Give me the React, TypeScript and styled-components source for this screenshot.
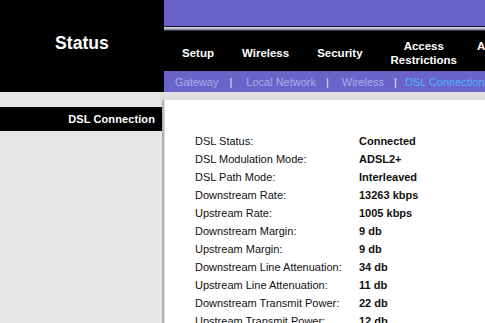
import React from "react";
import styled, { createGlobalStyle } from "styled-components";

const Global = createGlobalStyle`
  html, body { margin: 0; padding: 0; background: #e6e6e6; }
  body { width: 485px; height: 323px; overflow: hidden; font-family: "Liberation Sans", Arial, sans-serif; }
`;

const Page = styled.div`
  width: 485px;
  height: 323px;
  overflow: hidden;
  display: flex;
  flex-direction: column;
`;

const Header = styled.div`
  display: grid;
  grid-template-columns: 164px 1fr;
  height: 92px;
  background: #000;
`;

const TitleCell = styled.div`
  display: flex;
  align-items: flex-start;
  justify-content: center;
  padding-top: 32px;
  color: #fff;
  font-weight: bold;
  font-size: 17.6px;
  line-height: 22px;
`;

const HeaderRight = styled.div`
  display: flex;
  flex-direction: column;
  min-width: 0;
`;

const TopBar = styled.div`
  height: 26px;
  background: #6a64c9;
`;

const Divider = styled.div`
  height: 5px;
  background: linear-gradient(
    to bottom,
    #14142a 0px,
    #14142a 1px,
    #d8d8e4 1px,
    #b8b8c8 3px,
    #55556a 4px,
    #1a1a22 5px
  );
`;

const Nav = styled.div`
  height: 40px;
  box-sizing: border-box;
  padding: 4px 0 0 18px;
  display: flex;
  align-items: center;
  gap: 28px;
  white-space: nowrap;
`;

const NavItem = styled.div<{ $shift?: number }>`
  color: #fff;
  font-weight: bold;
  font-size: 11.5px;
  line-height: 14px;
  text-align: center;
  margin-left: ${(p) => (p.$shift ? `${p.$shift}px` : "0")};
`;

const SubNav = styled.div`
  height: 21px;
  background: #6a64c9;
  display: flex;
  align-items: center;
  padding-left: 11px;
  font-size: 11px;
  white-space: nowrap;
`;

const SubLink = styled.span<{ $active?: boolean }>`
  color: ${(p) => (p.$active ? "#4ab4ff" : "#aeaaea")};
`;

const Sep = styled.span<{ $left: number; $right: number }>`
  color: #e8e8ff;
  margin: 0 ${(p) => p.$right}px 0 ${(p) => p.$left}px;
`;

const Body = styled.div`
  flex: 1;
  display: grid;
  grid-template-columns: 162px 1fr;
  min-height: 0;
`;

const Side = styled.div`
  background: #e6e6e6;
  padding-top: 15px;
`;

const SideBar = styled.div`
  height: 24px;
  background: #000;
  color: #fff;
  font-weight: bold;
  font-size: 11px;
  letter-spacing: 0.1px;
  display: flex;
  align-items: center;
  justify-content: flex-end;
  padding-right: 7px;
`;

const Main = styled.div`
  display: flex;
  flex-direction: column;
  min-width: 0;
`;

const Band = styled.div`
  height: 8px;
  margin-left: -2px;
  background: linear-gradient(to bottom, #e4e4e4, #dadada);
`;

const Content = styled.div`
  flex: 1;
  background: #fff;
  border-left: 2px solid #b4b4b4;
  box-shadow: inset 1px 0 0 #dcdcdc;
  padding: 32px 0 0 31px;
`;

const Row = styled.div`
  display: grid;
  grid-template-columns: 164px 1fr;
  height: 18px;
  align-items: center;
  font-size: 11px;
  color: #111;
  white-space: nowrap;
`;

const Label = styled.span``;

const Value = styled.span`
  font-weight: bold;
`;

const rows: [string, string][] = [
  ["DSL Status:", "Connected"],
  ["DSL Modulation Mode:", "ADSL2+"],
  ["DSL Path Mode:", "Interleaved"],
  ["Downstream Rate:", "13263 kbps"],
  ["Upstream Rate:", "1005 kbps"],
  ["Downstream Margin:", "9 db"],
  ["Upstream Margin:", "9 db"],
  ["Downstream Line Attenuation:", "34 db"],
  ["Upstream Line Attenuation:", "11 db"],
  ["Downstream Transmit Power:", "22 db"],
  ["Upstream Transmit Power:", "12 db"],
];

export default function App() {
  return (
    <>
      <Global />
      <Page>
        <Header>
          <TitleCell>Status</TitleCell>
          <HeaderRight>
            <TopBar />
            <Divider />
            <Nav>
              <NavItem>Setup</NavItem>
              <NavItem>Wireless</NavItem>
              <NavItem>Security</NavItem>
              <NavItem>
                Access
                <br />
                Restrictions
              </NavItem>
              <NavItem $shift={-8}>
                Applications &amp;
                <br />
                Gaming
              </NavItem>
            </Nav>
            <SubNav>
              <SubLink>Gateway</SubLink>
              <Sep $left={11} $right={14}>|</Sep>
              <SubLink>Local Network</SubLink>
              <Sep $left={10} $right={13}>|</Sep>
              <SubLink>Wireless</SubLink>
              <Sep $left={10} $right={8}>|</Sep>
              <SubLink $active>DSL Connection</SubLink>
            </SubNav>
          </HeaderRight>
        </Header>
        <Body>
          <Side>
            <SideBar>DSL Connection</SideBar>
          </Side>
          <Main>
            <Band />
            <Content>
              {rows.map(([l, v]) => (
                <Row key={l}>
                  <Label>{l}</Label>
                  <Value>{v}</Value>
                </Row>
              ))}
            </Content>
          </Main>
        </Body>
      </Page>
    </>
  );
}
